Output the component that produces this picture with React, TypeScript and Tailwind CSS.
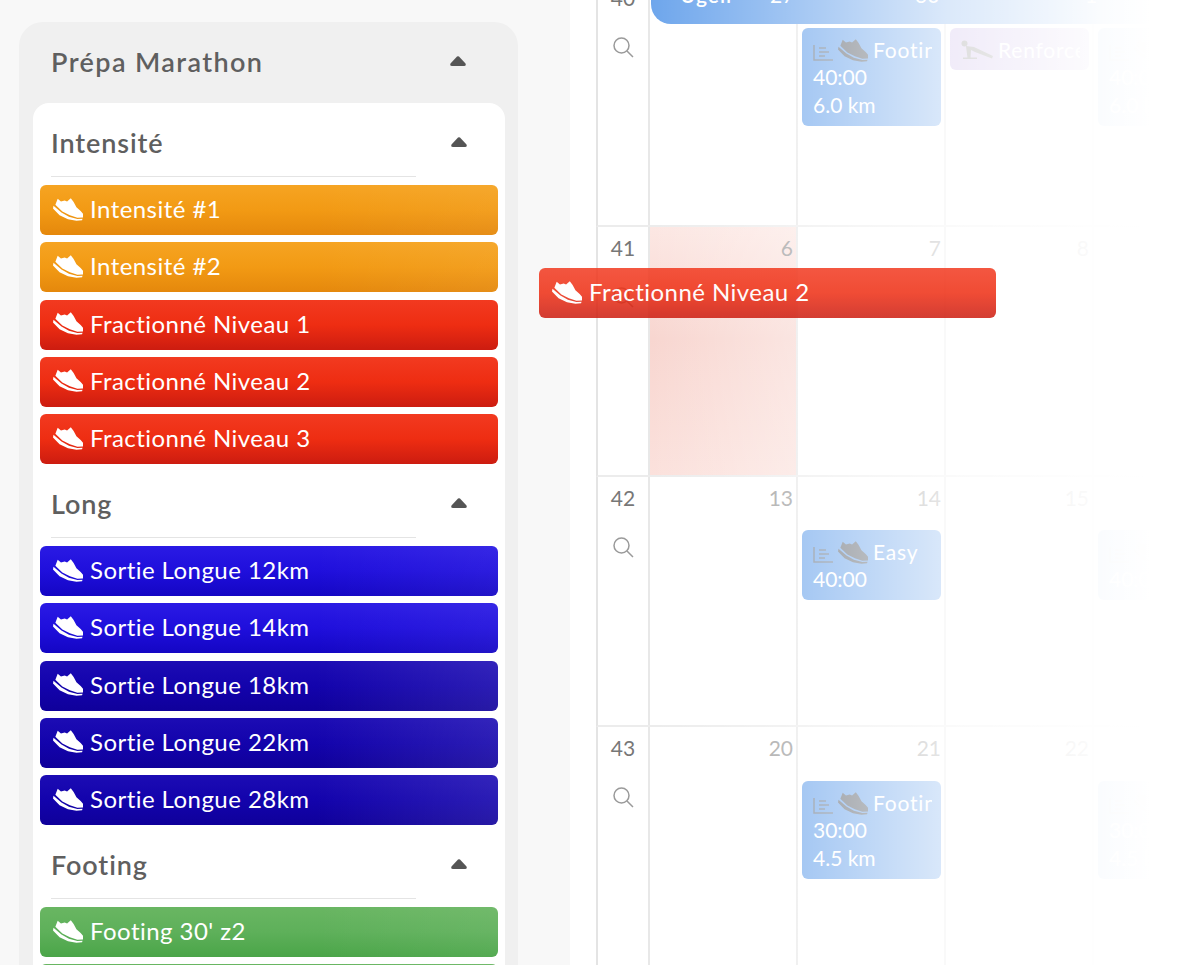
import React from 'react'

const font = { fontFamily: 'Lato, "Noto Sans", sans-serif' }

const Shoe = ({ className }: { className?: string }) => (
    <svg viewBox="0 0 32 24" className={className} fill="currentColor">
        <path d="M5 .5 L8.5 3.5 L12.5 2.5 L15 3.5 L19 0 L22 4 L25 9.5 L29.5 13.5 L32 16.5 L32 20.5 L26 20.8 L18 18 L10 14 L2.5 7 Z" />
        <path d="M.5 8 L9 15.3 L17 19.8 L26 22.2 L31.5 21.8 L31 23.5 L25 24 L16 22.5 L7 18 L0 11 Z" />
    </svg>
)

const Plank = () => (
    <svg viewBox="0 0 32 20" className="w-8 h-5 shrink-0 text-[#777]" fill="currentColor">
        <circle cx="3.5" cy="3.5" r="3" />
        <path d="M5 6 L13 7 L32 16 L31 18.5 L14 12 L10 10 L9.5 18 L6.5 18 Z" />
        <path d="M2 17.5 H16 V19 H2 Z" />
    </svg>
)

const Caret = ({ className }: { className?: string }) => (
    <svg viewBox="0 0 16 10" className={`w-4 h-2.5 text-[#555] ${className ?? ''}`} fill="currentColor">
        <path d="M7 .6 Q8 -.2 9 .6 L15.5 7.5 Q16.5 10 14 10 L2 10 Q-.5 10 .5 7.5 Z" />
    </svg>
)

const ChartIcon = () => (
    <svg viewBox="0 0 20 17" className="w-5 h-[17px] shrink-0 text-[#6f7c8c] mt-1" fill="none" stroke="currentColor" strokeWidth="1.5">
        <path d="M1 1 V16 H20" />
        <path d="M6 4 H13 M6 8 H16 M6 12 H12" />
    </svg>
)

const Search = () => (
    <svg viewBox="0 0 22 22" className="w-[22px] h-[22px] text-[#9a9a9a]" fill="none" stroke="currentColor" strokeWidth="1.5">
        <circle cx="9.5" cy="9.5" r="7.5" />
        <path d="M15 15 L21 21" />
    </svg>
)

const Workout = ({ label, color }: { label: string; color: string }) => (
    <div className={`h-[50px] rounded-md flex items-center pl-[13px] gap-[7px] pb-[2px] text-white text-[24px] tracking-[.45px] ${color}`}>
        <Shoe className="w-[30px] h-[23px] text-white" />
        <span>{label}</span>
    </div>
)

const orange = 'bg-[linear-gradient(to_right,transparent_60%,rgba(255,255,255,.05)),linear-gradient(180deg,#f6a422_0%,#f29a14_50%,#e5880c_100%)]'
const red = 'bg-[linear-gradient(180deg,#f23a20_0%,#ee2d12_50%,#cc1c10_100%)]'
const blue = 'bg-[linear-gradient(to_right,transparent_60%,rgba(255,255,255,.06)),linear-gradient(180deg,#2a1ae4_0%,#1f0fdc_50%,#1406c4_100%)]'
const navy = 'bg-[linear-gradient(to_right,transparent_60%,rgba(255,255,255,.1)),linear-gradient(180deg,#1c0cb4_0%,#1303ac_50%,#0f009a_100%)]'
const green = 'bg-[linear-gradient(to_right,transparent_60%,rgba(255,255,255,.06)),linear-gradient(180deg,#69b662_0%,#5eb05a_50%,#4aa548_100%)]'

const sections = [
    {
        title: 'Intensité',
        items: [
            ['Intensité #1', orange],
            ['Intensité #2', orange],
            ['Fractionné Niveau 1', red],
            ['Fractionné Niveau 2', red],
            ['Fractionné Niveau 3', red],
        ],
    },
    {
        title: 'Long',
        items: [
            ['Sortie Longue 12km', blue],
            ['Sortie Longue 14km', blue],
            ['Sortie Longue 18km', navy],
            ['Sortie Longue 22km', navy],
            ['Sortie Longue 28km', navy],
        ],
    },
    {
        title: 'Footing',
        items: [
            ["Footing 30' z2", green],
            ["Footing 40' z2", green],
        ],
    },
]

const Sidebar = () => (
    <div className="w-[570px] shrink-0 pl-[19px] pt-[22px] bg-[#f8f8f8]">
        <div className="w-[499px] rounded-t-[24px] bg-[#f0f0f0] px-[14px]">
            <div className="h-[81px] flex items-center justify-between pl-[18px] pr-[38px] text-[27px] font-semibold tracking-[1.4px] text-[#5f5f5f]">
                <span>Prépa Marathon</span>
                <Caret className="-mt-1" />
            </div>
            <div className="bg-white rounded-t-2xl w-[472px]">
                {sections.map((s) => (
                    <div key={s.title}>
                        <div className="h-[73px] pt-2 flex items-center justify-between pl-[18px] pr-[38px] text-[27px] font-semibold tracking-[.9px] text-[#5f5f5f]">
                            <span>{s.title}</span>
                            <Caret className="-mt-1" />
                        </div>
                        <div className="ml-[18px] w-[365px] h-px bg-[#e4e4e4] mb-2" />
                        <div className="flex flex-col gap-[7.25px] px-[7px]">
                            {s.items.map(([label, color]) => (
                                <Workout key={label} label={label} color={color} />
                            ))}
                        </div>
                    </div>
                ))}
            </div>
        </div>
    </div>
)

type Ev = { title: string; lines: string[]; chart?: boolean; purple?: boolean }

const EventCard = ({ ev }: { ev: Ev }) => (
    <div className={`ml-1 mr-[3px] rounded-md pl-[11px] pr-[9px] pt-[9px] pb-[7px] text-white text-[21px] leading-[28px] overflow-hidden ${ev.purple ? 'bg-[#c4b0e6]' : 'bg-[#6ea6ec]'}`}>
        <div className="flex items-center gap-[5px] whitespace-nowrap overflow-hidden h-[26px] tracking-[.8px]">
            {ev.chart && <ChartIcon />}
            {ev.purple ? <Plank /> : <Shoe className="shrink-0 w-[30px] h-[23px] text-[#5f6670]" />}
            <span>{ev.title}</span>
        </div>
        {ev.lines.map((l) => (
            <div key={l}>{l}</div>
        ))}
    </div>
)

type Row = { week: string; top: number; days: string[]; events: (Ev | null)[] }

const rows: Row[] = [
    {
        week: '40',
        top: 51,
        days: ['', '', '', ''],
        events: [
            null,
            { title: 'Footing', lines: ['40:00', '6.0 km'], chart: true },
            { title: 'Renforcement', lines: [], purple: true },
            { title: 'Footing', lines: ['40:00', '6.0 km'], chart: true },
        ],
    },
    { week: '41', top: 53, days: ['6', '7', '8', '9'], events: [null, null, null, null] },
    {
        week: '42',
        top: 53,
        days: ['13', '14', '15', '16'],
        events: [
            null,
            { title: 'Easy', lines: ['40:00'], chart: true },
            null,
            { title: 'Easy', lines: ['40:00'], chart: true },
        ],
    },
    {
        week: '43',
        top: 54,
        days: ['20', '21', '22', '23'],
        events: [
            null,
            { title: 'Footing', lines: ['30:00', '4.5 km'], chart: true },
            null,
            { title: 'Footing', lines: ['30:00', '4.5 km'], chart: true },
        ],
    },
]

const Calendar = () => (
    <div className="relative flex-1 bg-white">
        <div className="-mt-[23px] ml-[26px]">
            {rows.map((r, i) => (
                <div key={r.week} className="flex h-[250px] border-b-2 border-[#ececec] border-l-2 border-l-[#e4e4e4]">
                    <div className="w-[52px] shrink-0 border-r-2 border-[#e8e8e8] flex flex-col items-center text-[21px] text-[#777]">
                        <div className="h-[42px] flex items-center">{r.week}</div>
                        <div className="mt-[17px]">
                            <Search />
                        </div>
                    </div>
                    {r.days.map((d, j) => (
                        <div
                            key={j}
                            className={`w-[148px] shrink-0 border-r-2 border-[#e8e8e8] ${i === 1 && j === 0 ? 'bg-[linear-gradient(to_bottom,#fce7e3,#f8d6d0_45%,#fbe1dc)]' : ''}`}
                        >
                            <div className="flex justify-end items-start pr-[3px] pt-[8px] text-[21px] leading-[26px] text-[#999]" style={{ height: r.top }}>
                                {d}
                            </div>
                            {r.events[j] && <EventCard ev={r.events[j] as Ev} />}
                        </div>
                    ))}
                </div>
            ))}
        </div>

        {/* the all day bar of the week cut by the top of the page */}
        <div className="absolute left-[81px] top-[-30px] w-[499px] h-[54px] rounded-bl-[20px] bg-[#6ea6ec] text-white text-[21px] font-semibold">
            <span className="absolute left-[29px] bottom-[14px] tracking-[1px]">Ugeli</span>
            <span className="absolute left-[119px] bottom-[14px] font-normal">27</span>
            <span className="absolute left-[264px] bottom-[14px] font-normal">30</span>
            <span className="absolute left-[434px] bottom-[14px] font-normal">1</span>
        </div>

        {/* white fade over the right part of the calendar */}
        <div className="absolute inset-y-0 left-[81px] right-0 pointer-events-none bg-[linear-gradient(to_right,rgba(255,255,255,0)_0px,rgba(255,255,255,.38)_150px,rgba(255,255,255,.75)_295px,rgba(255,255,255,.97)_450px,#fff_500px)]" />

        {/* workout being dragged */}
        <div className="absolute left-[-31px] top-[268px] w-[457px] opacity-85">
            <Workout label="Fractionné Niveau 2" color={red} />
        </div>
    </div>
)

const App = () => {
    return (
        <div className="flex w-[1203px] h-[965px] overflow-hidden" style={font}>
            <Sidebar />
            <Calendar />
        </div>
    )
}

export default App
